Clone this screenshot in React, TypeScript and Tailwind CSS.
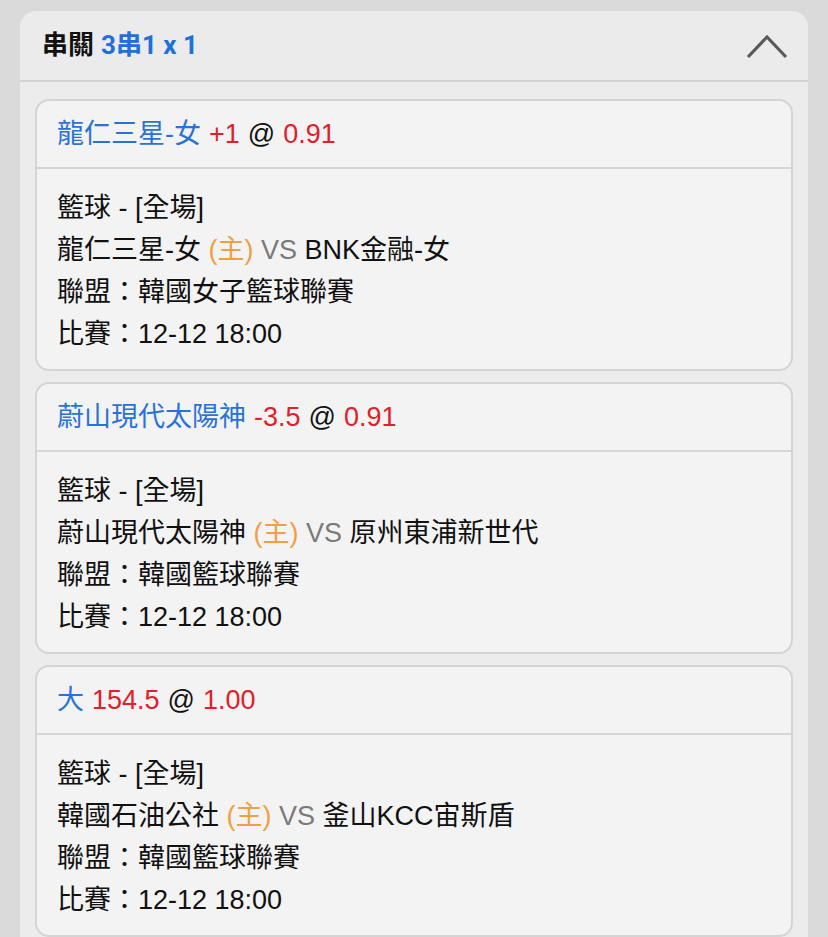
import React from "react";

type Bet = {
  pick: string;
  line: string;
  odds: string;
  home: string;
  away: string;
  league: string;
  time: string;
};

const bets: Bet[] = [
  { pick: "龍仁三星-女", line: "+1", odds: "0.91", home: "龍仁三星-女", away: "BNK金融-女", league: "韓國女子籃球聯賽", time: "12-12 18:00" },
  { pick: "蔚山現代太陽神", line: "-3.5", odds: "0.91", home: "蔚山現代太陽神", away: "原州東浦新世代", league: "韓國籃球聯賽", time: "12-12 18:00" },
  { pick: "大", line: "154.5", odds: "1.00", home: "韓國石油公社", away: "釜山KCC宙斯盾", league: "韓國籃球聯賽", time: "12-12 18:00" },
];

const font = { fontFamily: '"Liberation Sans", "Noto Sans CJK TC", sans-serif' };

function Card({ b }: { b: Bet }) {
  return (
    <div className="rounded-[14px] border-2 border-[#d4d4d4] bg-[#f3f3f3] overflow-hidden">
      <div className="h-[68px] flex items-center px-[20px] border-b-2 border-[#d6d6d6] text-[27px]">
        <span className="text-[#2a72d6]">{b.pick}</span>
        <span className="text-[#e0202a] ml-[8px]">{b.line}</span>
        <span className="text-[#111] ml-[8px]">@</span>
        <span className="text-[#e0202a] ml-[8px]">{b.odds}</span>
      </div>
      <div className="pt-[18px] pb-[14px] px-[20px] text-[27px] leading-[42px] text-[#111]">
        <div>籃球 - [全場]</div>
        <div>
          {b.home} <span className="text-[#f0a043]">(主)</span> <span className="text-[#7a7a7a]">VS</span> {b.away}
        </div>
        <div>聯盟：{b.league}</div>
        <div>比賽：{b.time}</div>
      </div>
    </div>
  );
}

export default function App() {
  return (
    <div className="w-[828px] h-[937px] bg-[#dadada] pt-[11px] pl-[20px] overflow-hidden" style={font}>
      <div className="w-[788px] rounded-t-[16px] bg-[#ececec] overflow-hidden">
        <div className="h-[71px] flex items-center justify-between pl-[22px] pr-[20px] border-b-2 border-[#d3d3d3] bg-[#ebebeb]">
          <div className="text-[26px] font-bold" style={{ fontFamily: '"Roboto", "Noto Sans CJK TC", sans-serif' }}>
            <span className="text-[#111]">串關</span>
            <span className="text-[#1f6fdc] ml-[7px]">3串1 x 1</span>
          </div>
          <svg width="42" height="26" viewBox="0 0 42 26" className="mt-[2px]">
            <path d="M2 23 L21 3 L40 23" fill="none" stroke="#5a5a5a" strokeWidth="3.2" />
          </svg>
        </div>
        <div className="px-[15px] pt-[17px] flex flex-col gap-[11px]">
          {bets.map((b, i) => (
            <Card key={i} b={b} />
          ))}
        </div>
      </div>
    </div>
  );
}
